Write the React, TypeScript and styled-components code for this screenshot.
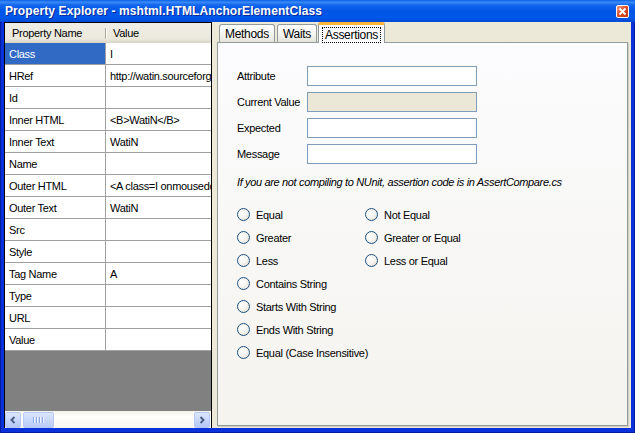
import React from "react";
import styled, { createGlobalStyle } from "styled-components";

const GlobalStyle = createGlobalStyle`
  html, body {
    margin: 0;
    padding: 0;
    background: #ffffff;
  }
  body {
    font-family: "Liberation Sans", Arial, sans-serif;
    font-size: 11px;
    letter-spacing: -0.3px;
    color: #000000;
  }
`;

const Window = styled.div`
  width: 635px;
  height: 433px;
  display: flex;
  flex-direction: column;
  background: #0831d9;
  box-shadow: inset 1px 0 0 #001ca0, inset -1px 0 0 #001ca0, inset 0 -1px 0 #001ca0;
  overflow: hidden;
`;

const TitleBar = styled.div`
  height: 22px;
  flex: none;
  display: flex;
  align-items: center;
  justify-content: space-between;
  padding: 0 6px 0 5px;
  background: linear-gradient(
    180deg,
    #0a5fe8 0%,
    #3b8cf7 10%,
    #1467ee 22%,
    #0055e5 50%,
    #0058ea 80%,
    #0049d4 100%
  );
  color: #ffffff;
  font-weight: bold;
  font-size: 12px;
  letter-spacing: 0.1px;
  text-shadow: 1px 1px 0 #0a2a9a;
`;

const CloseButton = styled.div`
  width: 13px;
  height: 13px;
  box-sizing: border-box;
  border: 1px solid #ffffff;
  border-radius: 2px;
  background: linear-gradient(135deg, #f4a08a 0%, #e0502c 45%, #c3370f 100%);
  display: flex;
  align-items: center;
  justify-content: center;
`;

const Client = styled.div`
  flex: 1;
  display: flex;
  margin: 0 4px 5px 4px;
  background: #ece9d8;
  min-height: 0;
`;

const Grid = styled.div`
  width: 208px;
  flex: none;
  box-sizing: border-box;
  border: 1px solid #000000;
  border-bottom: none;
  display: flex;
  flex-direction: column;
  background: #ffffff;
  overflow: hidden;
`;

const HeaderRow = styled.div`
  height: 20px;
  flex: none;
  display: flex;
  background: linear-gradient(180deg, #efeee6 0%, #ebe9dc 80%, #d8d4c4 100%);
`;

const HeaderCell = styled.div<{ $w?: number }>`
  width: ${(p) => (p.$w ? `${p.$w}px` : "auto")};
  flex: ${(p) => (p.$w ? "none" : "1")};
  display: flex;
  align-items: center;
  padding-left: 7px;
  box-sizing: border-box;
  position: relative;
`;

const HeaderSep = styled.div`
  position: absolute;
  right: 0;
  top: 5px;
  width: 1px;
  height: 11px;
  background: #aca899;
  box-shadow: 1px 0 0 #ffffff;
`;

const Row = styled.div`
  height: 22px;
  flex: none;
  display: flex;
  box-sizing: border-box;
  border-bottom: 1px solid #a0a0a0;
`;

const Cell = styled.div<{ $w?: number; $selected?: boolean }>`
  width: ${(p) => (p.$w ? `${p.$w}px` : "auto")};
  flex: ${(p) => (p.$w ? "none" : "1")};
  min-width: 0;
  box-sizing: border-box;
  display: flex;
  align-items: center;
  padding-left: 4px;
  white-space: nowrap;
  overflow: hidden;
  border-right: ${(p) => (p.$w ? "1px solid #a0a0a0" : "none")};
  background: ${(p) => (p.$selected ? "#316ac5" : "#ffffff")};
  color: ${(p) => (p.$selected ? "#ffffff" : "#000000")};
`;

const EmptyArea = styled.div`
  flex: 1;
  background: #808080;
`;

const HScroll = styled.div`
  height: 17px;
  flex: none;
  display: flex;
  align-items: center;
  gap: 1px;
  padding: 0 1px 0 0;
  background: linear-gradient(180deg, #f3f1ea 0%, #fefefb 30%, #f7f6f0 100%);
`;

const ScrollButton = styled.div`
  width: 16px;
  height: 16px;
  flex: none;
  box-sizing: border-box;
  border: 1px solid #b6c8f4;
  border-radius: 2px;
  background: linear-gradient(180deg, #dce6fd 0%, #c6d5fb 55%, #b4c6f4 100%);
  display: flex;
  align-items: center;
  justify-content: center;
`;

const ScrollThumb = styled.div`
  width: 31px;
  height: 16px;
  flex: none;
  box-sizing: border-box;
  margin-left: 1px;
  border: 1px solid #b6c8f4;
  border-radius: 2px;
  background: linear-gradient(180deg, #dbe5fd 0%, #c7d6fb 55%, #bacbf7 100%);
  display: flex;
  align-items: center;
  justify-content: center;
  gap: 1px;
`;

const Grip = styled.span`
  width: 1px;
  height: 6px;
  background: #8ca7e6;
  box-shadow: 1px 0 0 #eef3fe;
  margin-right: 1px;
`;

const ScrollTrack = styled.div`
  flex: 1;
`;

const TabControl = styled.div`
  flex: 1;
  display: flex;
  flex-direction: column;
  margin: 0 3px 2px 5px;
  min-width: 0;
`;

const TabStrip = styled.div`
  height: 20px;
  flex: none;
  display: flex;
  align-items: flex-end;
  padding-left: 2px;
  gap: 2px;
`;

const Tab = styled.div<{ $active?: boolean }>`
  height: ${(p) => (p.$active ? "21px" : "18px")};
  box-sizing: border-box;
  padding: ${(p) => (p.$active ? "2px 4px 0" : "0 5px")};
  margin: ${(p) => (p.$active ? "0 0 -1px -1px" : "0")};
  border: 1px solid #919b9c;
  border-bottom: none;
  border-top: ${(p) => (p.$active ? "3px solid #ffb43c" : "1px solid #919b9c")};
  border-radius: 3px 3px 0 0;
  background: ${(p) =>
    p.$active ? "#fcfcfe" : "linear-gradient(180deg, #ffffff 0%, #f3f3ef 60%, #e4e2d9 100%)"};
  display: flex;
  align-items: center;
  position: relative;
  z-index: ${(p) => (p.$active ? 1 : 0)};
  font-size: 12px;
`;

const FocusLabel = styled.span`
  outline: 1px dotted #000000;
  padding: 0 2px;
  line-height: 14px;
`;

const Panel = styled.div`
  flex: 1;
  box-sizing: border-box;
  border: 1px solid #919b9c;
  background: linear-gradient(180deg, #fcfcfe 0%, #f4f3ee 100%);
  box-shadow: 1px 1px 0 #d0cdbf;
  padding: 23px 0 0 19px;
`;

const Form = styled.div`
  display: grid;
  grid-template-columns: 70px 170px;
  row-gap: 6px;
  align-items: center;
`;

const Label = styled.label`
  white-space: nowrap;
  line-height: 14px;
`;

const TextBox = styled.div<{ $disabled?: boolean }>`
  height: 20px;
  box-sizing: border-box;
  border: 1px solid #7f9db9;
  background: ${(p) => (p.$disabled ? "#ebe8d8" : "#ffffff")};
`;

const Note = styled.div`
  margin-top: 11px;
  font-style: italic;
  line-height: 14px;
  letter-spacing: -0.35px;
  white-space: nowrap;
`;

const RadioGrid = styled.div`
  margin-top: 14px;
  display: grid;
  grid-auto-flow: column;
  grid-template-rows: repeat(7, 23px);
  grid-template-columns: 128px auto;
  align-items: center;
`;

const RadioItem = styled.div`
  display: flex;
  align-items: center;
  gap: 6px;
  white-space: nowrap;
  line-height: 14px;
`;

const RadioCircle = styled.span`
  width: 13px;
  height: 13px;
  flex: none;
  box-sizing: border-box;
  border-radius: 50%;
  border: 1px solid #1c5180;
  background: radial-gradient(circle at 35% 35%, #ffffff 0%, #f4f3ee 50%, #d8d5c8 100%);
`;

const rows: [string, string][] = [
  ["Class", "I"],
  ["HRef", "http://watin.sourceforge.net/"],
  ["Id", ""],
  ["Inner HTML", "<B>WatiN</B>"],
  ["Inner Text", "WatiN"],
  ["Name", ""],
  ["Outer HTML", "<A class=I onmousedown=\"return clk(this)\">"],
  ["Outer Text", "WatiN"],
  ["Src", ""],
  ["Style", ""],
  ["Tag Name", "A"],
  ["Type", ""],
  ["URL", ""],
  ["Value", ""],
];

const comparisons = [
  "Equal",
  "Greater",
  "Less",
  "Contains String",
  "Starts With String",
  "Ends With String",
  "Equal (Case Insensitive)",
  "Not Equal",
  "Greater or Equal",
  "Less or Equal",
];

const Arrow = ({ dir }: { dir: "left" | "right" }) => (
  <svg width="8" height="8" viewBox="0 0 8 8">
    <path
      d={dir === "left" ? "M5.5 1 L2.5 4 L5.5 7" : "M2.5 1 L5.5 4 L2.5 7"}
      fill="none"
      stroke="#4d6185"
      strokeWidth="2"
    />
  </svg>
);

export default function App() {
  return (
    <>
      <GlobalStyle />
      <Window>
        <TitleBar>
          <span>Property Explorer - mshtml.HTMLAnchorElementClass</span>
          <CloseButton>
            <svg width="9" height="9" viewBox="0 0 9 9">
              <path d="M1.5 1.5 L7.5 7.5 M7.5 1.5 L1.5 7.5" stroke="#ffffff" strokeWidth="1.8" />
            </svg>
          </CloseButton>
        </TitleBar>
        <Client>
          <Grid>
            <HeaderRow>
              <HeaderCell $w={101}>
                Property Name
                <HeaderSep />
              </HeaderCell>
              <HeaderCell>Value</HeaderCell>
            </HeaderRow>
            {rows.map(([name, value], i) => (
              <Row key={name}>
                <Cell $w={101} $selected={i === 0}>
                  {name}
                </Cell>
                <Cell>{value}</Cell>
              </Row>
            ))}
            <EmptyArea />
            <HScroll>
              <ScrollButton>
                <Arrow dir="left" />
              </ScrollButton>
              <ScrollThumb>
                <Grip />
                <Grip />
                <Grip />
                <Grip />
              </ScrollThumb>
              <ScrollTrack />
              <ScrollButton>
                <Arrow dir="right" />
              </ScrollButton>
            </HScroll>
          </Grid>
          <TabControl>
            <TabStrip>
              <Tab>Methods</Tab>
              <Tab>Waits</Tab>
              <Tab $active>
                <FocusLabel>Assertions</FocusLabel>
              </Tab>
            </TabStrip>
            <Panel>
              <Form>
                <Label>Attribute</Label>
                <TextBox />
                <Label>Current Value</Label>
                <TextBox $disabled />
                <Label>Expected</Label>
                <TextBox />
                <Label>Message</Label>
                <TextBox />
              </Form>
              <Note>If you are not compiling to NUnit, assertion code is in AssertCompare.cs</Note>
              <RadioGrid>
                {comparisons.map((c) => (
                  <RadioItem key={c}>
                    <RadioCircle />
                    {c}
                  </RadioItem>
                ))}
              </RadioGrid>
            </Panel>
          </TabControl>
        </Client>
      </Window>
    </>
  );
}
